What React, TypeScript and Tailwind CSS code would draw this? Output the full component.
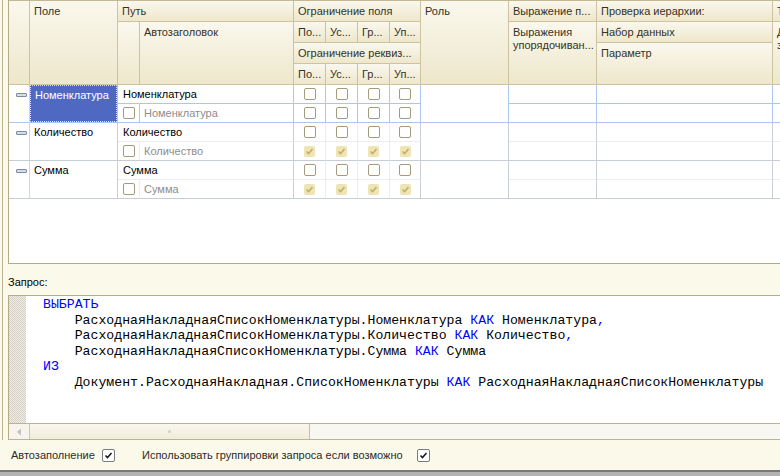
import React from "react";

const COLS = "grid-cols-[21px_88px_22px_154px_32px_32px_32px_31px_88px_88px_176px_1fr]";

type Lines = { bot: string; sub: string; maj: string; min: string };

const ACTIVE: Lines = {
  bot: "border-b-[#abc7ea]",
  sub: "border-b-[#abc7ea]",
  maj: "border-r-[#abc7ea]",
  min: "border-r-[#abc7ea]",
};

const IDLE: Lines = {
  bot: "border-b-[#c6cdd5]",
  sub: "border-b-[#ededed]",
  maj: "border-r-[#c9cfd7]",
  min: "border-r-[#ededed]",
};

function H({ className = "", children }: { className?: string; children?: React.ReactNode }) {
  return (
    <div
      className={`border-r border-b border-[#cdc3a0] bg-linear-to-b from-[#faf8ee] to-[#eee7cb] px-[4px] pt-[4px] leading-[13px] overflow-hidden whitespace-nowrap text-[#35311f] ${className}`}
    >
      {children}
    </div>
  );
}

function Box() {
  return <div className="w-[12px] h-[12px] rounded-[2px] border border-[#a39b7c] bg-white" />;
}

function DimCheck() {
  return (
    <div className="w-[11px] h-[11px] rounded-[2px] bg-[#efe4b4] flex items-center justify-center">
      <svg width="9" height="9" viewBox="0 0 9 9">
        <path d="M1.5 4.5 L3.5 6.5 L7.5 2" fill="none" stroke="#c2ae68" strokeWidth="1.6" />
      </svg>
    </div>
  );
}

function BlackCheck() {
  return (
    <div className="w-[13px] h-[13px] shrink-0 rounded-[2px] border border-[#7b7b7b] bg-white flex items-center justify-center">
      <svg width="9" height="9" viewBox="0 0 9 9">
        <path d="M1.5 4.5 L3.5 6.5 L7.5 2" fill="none" stroke="#1a1a1a" strokeWidth="1.6" />
      </svg>
    </div>
  );
}

function Record({ name, active, dim }: { name: string; active: boolean; dim: boolean }) {
  const l = active ? ACTIVE : IDLE;
  const center = "flex items-center justify-center border-r border-b";
  return (
    <div className={`grid ${COLS} grid-rows-[19px_19px]`}>
      <div className={`col-start-1 row-start-1 row-span-2 border-r border-b border-r-[#d6d6d6] ${l.bot} pl-[7px] pt-[8px]`}>
        <div className="w-[11px] h-[4px] rounded-[1px] border border-[#7a8aa6] bg-[#d5dde9]" />
      </div>
      <div className={`col-start-2 row-start-1 row-span-2 border-r border-b ${l.maj} ${l.bot}`}>
        {active ? (
          <div className="h-full bg-[#4f69c3] border border-dotted border-[#d6dcf3] text-white pl-[4px]">
            <div className="h-[18px] flex items-center">{name}</div>
          </div>
        ) : (
          <div className="h-[19px] flex items-center pl-[4px]">{name}</div>
        )}
      </div>
      <div className={`col-start-3 col-span-2 row-start-1 border-r border-b ${l.maj} ${l.sub} flex items-center pl-[5px]`}>
        {name}
      </div>
      <div className={`col-start-3 row-start-2 ${center} ${l.min} ${l.bot}`}>
        <Box />
      </div>
      <div className={`col-start-4 row-start-2 border-r border-b ${l.maj} ${l.bot} flex items-center pl-[4px] text-[#8d8d8d]`}>
        {name}
      </div>

      <div className={`col-start-5 row-start-1 ${center} ${l.min} ${l.sub}`}><Box /></div>
      <div className={`col-start-6 row-start-1 ${center} ${l.min} ${l.sub}`}><Box /></div>
      <div className={`col-start-7 row-start-1 ${center} ${l.min} ${l.sub}`}><Box /></div>
      <div className={`col-start-8 row-start-1 ${center} ${l.maj} ${l.sub}`}><Box /></div>
      <div className={`col-start-5 row-start-2 ${center} ${l.min} ${l.bot}`}>{dim ? <DimCheck /> : <Box />}</div>
      <div className={`col-start-6 row-start-2 ${center} ${l.min} ${l.bot}`}>{dim ? <DimCheck /> : <Box />}</div>
      <div className={`col-start-7 row-start-2 ${center} ${l.min} ${l.bot}`}>{dim ? <DimCheck /> : <Box />}</div>
      <div className={`col-start-8 row-start-2 ${center} ${l.maj} ${l.bot}`}>{dim ? <DimCheck /> : <Box />}</div>

      <div className={`col-start-9 row-start-1 row-span-2 border-r border-b ${l.maj} ${l.bot}`} />
      <div className={`col-start-10 row-start-1 border-r border-b ${l.maj} ${l.sub}`} />
      <div className={`col-start-10 row-start-2 border-r border-b ${l.maj} ${l.bot}`} />
      <div className={`col-start-11 row-start-1 border-r border-b ${l.maj} ${l.sub}`} />
      <div className={`col-start-11 row-start-2 border-r border-b ${l.maj} ${l.bot}`} />
      <div className={`col-start-12 row-start-1 border-b ${l.sub}`} />
      <div className={`col-start-12 row-start-2 border-b ${l.bot}`} />
    </div>
  );
}

const K = ({ children }: { children: React.ReactNode }) => <span className="text-[#0000ff]">{children}</span>;

export default function App() {
  return (
    <div className="w-[780px] h-[476px] overflow-hidden bg-[#fbf9ea] font-['Liberation_Sans',Arial,sans-serif] text-[11px] text-black">
      <div className="flex h-[440px]">
        <div className="w-[8px] shrink-0 pl-[2px]">
          <div className="w-px h-full bg-[#b9b090]" />
        </div>

        <div className="flex-1 flex flex-col min-w-0">
          {/* grid of fields */}
          <div className="h-[264px] shrink-0 flex flex-col border-l border-b border-[#b5ab86] bg-white">
            <div className={`grid ${COLS} grid-rows-[21px_21px_21px_21px] border-t border-[#c2b891]`}>
              <H className="col-start-1 row-start-1 row-span-4" />
              <H className="col-start-2 row-start-1 row-span-4">Поле</H>
              <H className="col-start-3 col-span-2 row-start-1">Путь</H>
              <H className="col-start-3 row-start-2 row-span-3" />
              <H className="col-start-4 row-start-2 row-span-3">Автозаголовок</H>
              <H className="col-start-5 col-span-4 row-start-1">Ограничение поля</H>
              <H className="col-start-5 row-start-2">По...</H>
              <H className="col-start-6 row-start-2">Ус...</H>
              <H className="col-start-7 row-start-2">Гр...</H>
              <H className="col-start-8 row-start-2">Уп...</H>
              <H className="col-start-5 col-span-4 row-start-3">Ограничение реквиз...</H>
              <H className="col-start-5 row-start-4">По...</H>
              <H className="col-start-6 row-start-4">Ус...</H>
              <H className="col-start-7 row-start-4">Гр...</H>
              <H className="col-start-8 row-start-4">Уп...</H>
              <H className="col-start-9 row-start-1 row-span-4">Роль</H>
              <H className="col-start-10 row-start-1">Выражение п...</H>
              <H className="col-start-10 row-start-2 row-span-3">
                Выражения
                <br />
                упорядочиван...
              </H>
              <H className="col-start-11 row-start-1">Проверка иерархии:</H>
              <H className="col-start-11 row-start-2">Набор данных</H>
              <H className="col-start-11 row-start-3 row-span-2">Параметр</H>
              <H className="col-start-12 row-start-1 border-r-0">Тип</H>
              <H className="col-start-12 row-start-2 row-span-3 border-r-0">
                Доступные
                <br />
                значения
              </H>
            </div>

            <Record name="Номенклатура" active dim={false} />
            <Record name="Количество" active={false} dim />
            <Record name="Сумма" active={false} dim />
          </div>

          {/* query label */}
          <div className="h-[31px] shrink-0 pt-[12px] leading-[13px]">Запрос:</div>

          {/* query text */}
          <div className="h-[145px] shrink-0 flex flex-col border-t border-l border-[#b5ab86]">
            <div className="h-[127px] flex min-h-0">
              <div className="w-[17px] shrink-0 bg-[repeating-conic-gradient(#d4d1c4_0_25%,#efede5_0_50%)] bg-[length:2px_2px]" />
              <pre className="flex-1 bg-white pl-[17px] pt-[1px] font-['Liberation_Mono','Courier_New',monospace] text-[13.2px] leading-[15.6px] text-black overflow-hidden">
                <K>ВЫБРАТЬ</K>
                {"\n    РасходнаяНакладнаяСписокНоменклатуры.Номенклатура "}
                <K>КАК</K>
                {" Номенклатура"}
                <K>,</K>
                {"\n    РасходнаяНакладнаяСписокНоменклатуры.Количество "}
                <K>КАК</K>
                {" Количество"}
                <K>,</K>
                {"\n    РасходнаяНакладнаяСписокНоменклатуры.Сумма "}
                <K>КАК</K>
                {" Сумма\n"}
                <K>ИЗ</K>
                {"\n    Документ.РасходнаяНакладная.СписокНоменклатуры "}
                <K>КАК</K>
                {" РасходнаяНакладнаяСписокНоменклатуры"}
              </pre>
            </div>
            <div className="h-[17px] shrink-0 flex border-t border-b border-[#bdb391] bg-[#f8f7f1]">
              <div className="w-[21px] shrink-0 border-r border-[#cfc7a8] bg-[#f6f4ec] flex items-center justify-center">
                <svg width="6" height="8" viewBox="0 0 6 8">
                  <path d="M5 0.5 L0.8 4 L5 7.5 Z" fill="#c4c4c4" />
                </svg>
              </div>
              <div className="w-[280px] shrink-0 border-r border-[#c7bf9e] bg-linear-to-b from-[#f9f7ee] to-[#f1edda] flex items-center justify-center">
                <div className="w-[3px] h-[3px] rounded-full bg-[#cfcfcf]" />
              </div>
              <div className="flex-1" />
            </div>
          </div>
        </div>
      </div>

      {/* bottom options */}
      <div className="h-[30px] flex items-center pl-[11px] text-[#2b2b2b]">
        <span className="w-[91px] shrink-0">Автозаполнение</span>
        <BlackCheck />
        <span className="w-[275px] shrink-0 ml-[27px]">Использовать группировки запроса если возможно</span>
        <BlackCheck />
      </div>
      <div className="h-[2px] bg-[#7a7a7a]" />
      <div className="h-[4px] bg-[#b3b3b3]" />
    </div>
  );
}
